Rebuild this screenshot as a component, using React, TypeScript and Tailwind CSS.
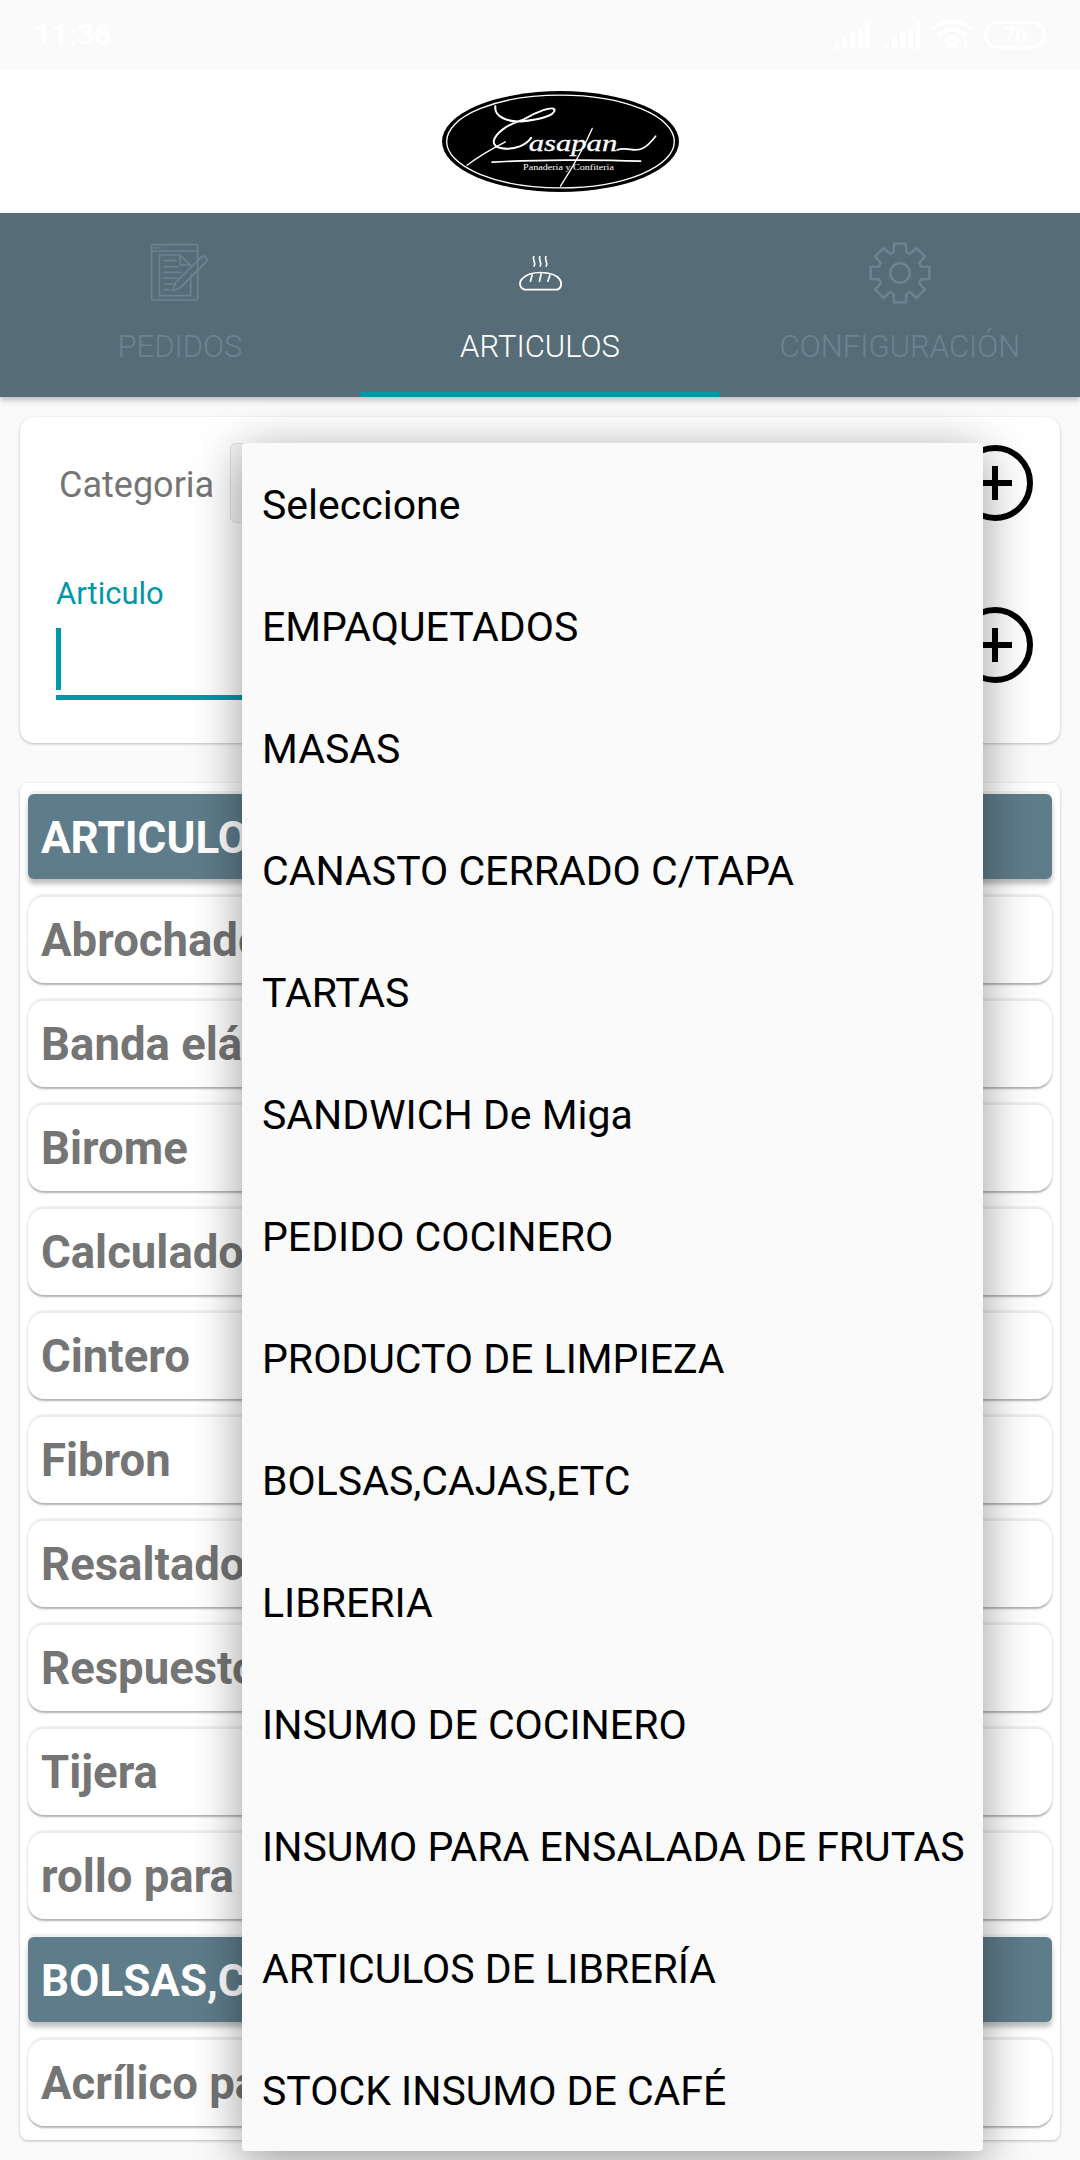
const opciones = [
  'Seleccione',
  'EMPAQUETADOS',
  'MASAS',
  'CANASTO CERRADO C/TAPA',
  'TARTAS',
  'SANDWICH De Miga',
  'PEDIDO COCINERO',
  'PRODUCTO DE LIMPIEZA',
  'BOLSAS,CAJAS,ETC',
  'LIBRERIA',
  'INSUMO DE COCINERO',
  'INSUMO PARA ENSALADA DE FRUTAS',
  'ARTICULOS DE LIBRERÍA',
  'STOCK INSUMO DE CAFÉ',
];

const articulos = ['Abrochadora', 'Banda elástica', 'Birome', 'Calculadora', 'Cintero', 'Fibron', 'Resaltador', 'Respuesto', 'Tijera', 'rollo para sumadora'];

function gearPath() {
  const pts: string[] = [];
  for (let i = 0; i < 8; i++) {
    const a = (i * Math.PI) / 4;
    const p = (r: number, d: number) => `${(30 + r * Math.sin(a + d)).toFixed(2)} ${(30 - r * Math.cos(a + d)).toFixed(2)}`;
    pts.push(`${i === 0 ? 'M' : 'L'}${p(21, -0.3)}`, `L${p(29, -0.2)}`, `L${p(29, 0.2)}`, `L${p(21, 0.3)}`);
  }
  return pts.join(' ') + ' Z';
}

function Signal() {
  return (
    <svg width="38" height="27" viewBox="0 0 38 27" fill="#fff">
      <path d="M0 27 L7 21 V27 Z" />
      <rect x="10" y="15" width="5" height="12" />
      <rect x="18" y="9" width="5" height="18" />
      <rect x="26" y="5" width="5" height="22" />
      <rect x="33" y="0" width="5" height="27" />
    </svg>
  );
}

function Wifi() {
  return (
    <svg width="40" height="32" viewBox="0 0 40 32" fill="none" stroke="#fff" strokeWidth="4" strokeLinecap="round">
      <path d="M2 9 C12 0 28 0 38 9" />
      <path d="M8 15 C14 9 26 9 32 15" />
      <path d="M14 21 C17 18 23 18 26 21" />
      <circle cx="20" cy="26" r="2" fill="#fff" />
      <path d="M34 22 V31" strokeWidth="2" />
    </svg>
  );
}

function Logo() {
  return (
    <svg width="237" height="101" viewBox="125 60 710 302">
      <ellipse cx="480" cy="211" rx="355" ry="151" fill="#000" />
      <ellipse cx="480" cy="211" rx="341" ry="139" fill="none" stroke="#fff" strokeWidth="4" />
      <g fill="none" stroke="#fff" strokeLinecap="round">
        <path strokeWidth="6" d="M285 105 C280 135 320 155 370 150 C410 146 465 135 462 115 C455 105 410 120 370 145 C320 160 285 185 280 210 C278 232 320 240 360 225 C375 218 385 210 392 200" />
        <path strokeWidth="4" d="M200 282 C235 255 270 235 315 212" />
        <path strokeWidth="4" d="M575 172 C550 230 515 290 480 345" />
        <path strokeWidth="5" d="M650 236 C680 225 700 245 725 232 C740 225 755 208 765 195" />
        <path strokeWidth="5" d="M275 273 C400 265 600 265 720 270" />
      </g>
      <text x="385" y="240" fill="#fff" stroke="#fff" strokeWidth="1" fontFamily="'Liberation Serif', serif" fontStyle="italic" fontSize="72" textLength="265" lengthAdjust="spacingAndGlyphs">asapan</text>
      <text x="368" y="297" fill="#fff" fontFamily="'Liberation Serif', serif" fontSize="24" textLength="272" lengthAdjust="spacingAndGlyphs">Panaderia y Confiteria</text>
    </svg>
  );
}

function IconoPedidos() {
  return (
    <svg width="60" height="60" viewBox="150 72 180 180" fill="none" stroke="#6a8492" strokeWidth="5" strokeLinejoin="round" strokeLinecap="round">
      <rect x="155" y="77" width="138" height="166" rx="5" />
      <path d="M155 96 H293" />
      <path d="M164 87 H182" strokeDasharray="3 5" />
      <path d="M272 165 V230 H178 V108 H240 L272 140" />
      <path d="M240 108 V138 H272" />
      <path d="M192 125 H228 M192 143 H232 M192 160 H244 M192 177 H232 M192 195 H226 M192 212 H208" />
      <path d="M217 216 L226 192 L305 113 C312 106 326 120 319 128 L241 206 Z" />
    </svg>
  );
}

function IconoPan() {
  return (
    <svg width="47" height="37" viewBox="110 105 140 110" fill="none" stroke="#fff" strokeWidth="5" strokeLinecap="round" strokeLinejoin="round">
      <path d="M160 110 C154 118 168 126 161 138 M178 110 C172 118 186 126 179 138 M196 110 C190 118 204 126 197 138" />
      <path d="M132 208 C118 204 114 186 126 175 C140 161 162 157 180 157 C200 157 224 161 236 176 C246 188 242 204 230 208 Z" />
      <path d="M155 165 L150 183 M182 161 L177 183 M208 165 L202 183" />
    </svg>
  );
}

function IconoConfig() {
  return (
    <svg width="62" height="62" viewBox="0 0 60 60" fill="none" stroke="#6a8492" strokeWidth="2.4" strokeLinejoin="round">
      <path d={gearPath()} />
      <circle cx="30" cy="30" r="9.5" />
    </svg>
  );
}

function Mas() {
  return (
    <svg className="shrink-0" width="76" height="76" viewBox="0 0 76 76" fill="none" stroke="#000" strokeWidth="6">
      <circle cx="38" cy="38" r="35" />
      <path d="M38 21 V55 M21 38 H55" />
    </svg>
  );
}

function FilaTitulo({ texto }: { texto: string }) {
  return (
    <div className="h-[85px] rounded-[6px] bg-[#5f7c8a] pl-[13px] pt-[2px] flex items-center text-[44px] font-bold text-white whitespace-nowrap shadow-[0_-3px_0_rgba(0,0,0,0.06),0_5px_5px_rgba(0,0,0,0.25)]">
      {texto}
    </div>
  );
}

function FilaArticulo({ texto }: { texto: string }) {
  return (
    <div className="h-[86px] rounded-[16px] bg-white pl-[13px] pt-[2px] flex items-center text-[45.5px] font-bold text-[#757575] whitespace-nowrap shadow-[0_-3px_1px_rgba(0,0,0,0.07),0_2px_2px_rgba(0,0,0,0.3)]">
      {texto}
    </div>
  );
}

export default function App() {
  return (
    <div className="relative w-[1080px] h-[2160px] overflow-hidden bg-[#fafafa] font-['Roboto',sans-serif]">
      {/* barra de estado */}
      <div className="h-[70px] flex items-center justify-between pl-[34px] pr-[34px] text-white">
        <span className="text-[30px] font-bold leading-none">11:36</span>
        <div className="flex items-center gap-[12px]">
          <Signal />
          <Signal />
          <Wifi />
          <div className="w-[62px] h-[28px] rounded-[14px] border-[3px] border-white flex items-center justify-center text-[20px] font-bold leading-none">70</div>
        </div>
      </div>

      {/* logo */}
      <div className="h-[143px] bg-white flex items-center justify-center pl-[40px]">
        <Logo />
      </div>

      {/* pestañas */}
      <div className="h-[184px] bg-[#566d77] grid grid-cols-3 shadow-[0_3px_6px_rgba(0,0,0,0.25)] relative">
        <div className="flex flex-col items-center pt-[30px]">
          <div className="h-[60px] flex items-center"><IconoPedidos /></div>
          <span className="mt-[26px] text-[31px] leading-[36px] font-light text-[#6a8492]">PEDIDOS</span>
        </div>
        <div className="flex flex-col items-center pt-[30px] border-b-[5px] border-[#0097a7]">
          <div className="h-[60px] flex items-center"><IconoPan /></div>
          <span className="mt-[26px] text-[31px] leading-[36px] font-light text-white">ARTICULOS</span>
        </div>
        <div className="flex flex-col items-center pt-[30px]">
          <div className="h-[60px] flex items-center"><IconoConfig /></div>
          <span className="mt-[26px] text-[31px] leading-[36px] font-light text-[#6a8492]">CONFIGURACIÓN</span>
        </div>
      </div>

      <div className="px-[20px] pt-[20px]">
        {/* formulario */}
        <div className="h-[326px] rounded-[14px] bg-white pt-[26px] pl-[36px] pr-[27px] shadow-[0_1px_3px_rgba(0,0,0,0.25)]">
          <div className="flex items-center h-[80px]">
            <span className="w-[174px] pl-[3px] pt-[3px] text-[36px] text-[#757575]">Categoria</span>
            <div className="flex-1 h-[80px] mr-[17px] rounded-[6px] bg-[#f5f5f5] border border-[#e0e0e0]" />
            <Mas />
          </div>
          <div className="flex items-start mt-[52px]">
            <div className="flex-1 mr-[17px]">
              <div className="pt-[1px] text-[31px] leading-[35px] text-[#0097a7]">Articulo</div>
              <div className="mt-[17px] w-[5px] h-[62px] bg-[#0097a7]" />
              <div className="mt-[5px] h-[5px] bg-[#0097a7]" />
            </div>
            <div className="mt-[32px]"><Mas /></div>
          </div>
        </div>

        {/* lista */}
        <div className="mt-[40px] h-[1357px] rounded-[8px] bg-white pt-[11px] px-[8px] flex flex-col gap-[18px] shadow-[0_1px_3px_rgba(0,0,0,0.25)]">
          <FilaTitulo texto="ARTICULOS DE LIBRERÍA" />
          {articulos.map(a => <FilaArticulo key={a} texto={a} />)}
          <FilaTitulo texto="BOLSAS,CAJAS,ETC" />
          <FilaArticulo texto="Acrílico para cartel" />
        </div>
      </div>

      {/* desplegable abierto sobre el contenido */}
      <div className="absolute left-[242px] top-[443px] w-[741px] rounded-[4px] bg-[#fafafa] shadow-[0_10px_50px_rgba(0,0,0,0.4)]">
        {opciones.map(o => (
          <div key={o} className="h-[122px] pl-[20px] pt-[4px] flex items-center text-[41px] text-black whitespace-nowrap">{o}</div>
        ))}
      </div>
    </div>
  );
}
